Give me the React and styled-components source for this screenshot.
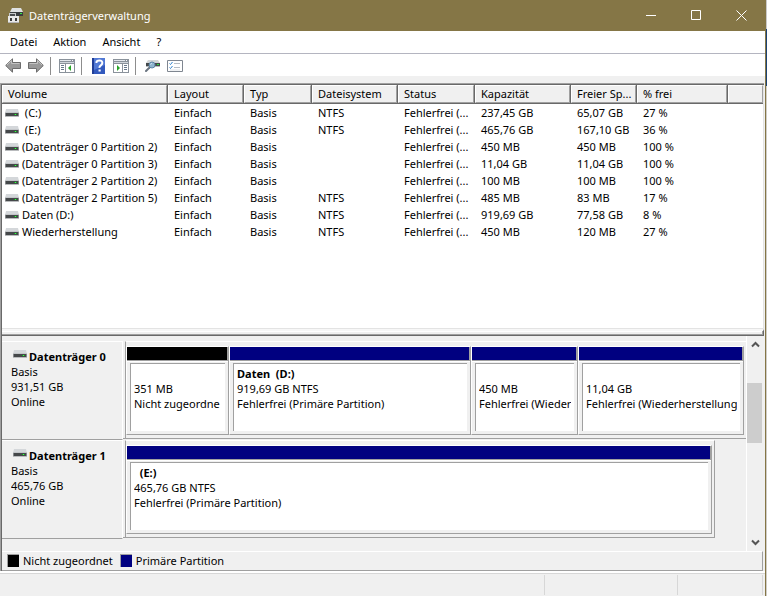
import React from "react";
import styled, { createGlobalStyle, ThemeProvider } from "styled-components";

const theme = {
  font: '"Noto Sans", "Open Sans", sans-serif',
  olive: "#857646",
  face: "#f0f0f0",
  shadow: "#a0a0a0",
  shadowDark: "#696969",
  light: "#e3e3e3",
  primary: "#000080"
};

const GlobalStyle = createGlobalStyle`
  *, *::before, *::after {
    box-sizing: border-box;
  }
  body {
    margin: 0;
    font-family: ${props => props.theme.font};
    font-size: 11px;
    line-height: 15px;
    color: #000;
  }
  button {
    font: inherit;
    color: inherit;
    border: none;
    padding: 0;
    background: none;
  }
  svg {
    display: block;
    flex: none;
  }
`;

const Desktop = styled.div`
  min-height: 100vh;
  padding-right: 1px;
  display: flex;
  background: linear-gradient(#c9c9c9 29px, #1c4273 29px, #1c4273 86px, #cfccc6 86px);
`;
const Window = styled.div`
  flex: 1;
  min-width: 0;
  display: flex;
  flex-direction: column;
  background-color: ${props => props.theme.face};
  border-right: 1px solid ${props => props.theme.olive};
`;
const TitleBar = styled.header`
  height: 31px;
  display: flex;
  align-items: center;
  gap: 6px;
  padding-left: 8px;
  background-color: ${props => props.theme.olive};
  color: #fff;
`;
const Title = styled.h1`
  flex: 1;
  margin: 0;
  font-size: 11px;
  font-weight: 400;
`;
const WindowButton = styled.button`
  width: 45px;
  height: 31px;
  display: flex;
  align-items: center;
  justify-content: center;
`;
const WindowButtons = styled.div`
  display: flex;
  padding-right: 1px;
`;
const MenuBar = styled.nav`
  height: 23px;
  display: flex;
  padding-left: 2px;
  background-color: #fff;
  border-bottom: 1px solid #b4b5c0;
`;
const MenuItem = styled.button`
  padding: 0 8px 2px;
`;
const Toolbar = styled.div`
  height: 22px;
  display: flex;
  padding: 1px 2px 0;
  background-color: #fff;
`;
const ToolButton = styled.button`
  width: 23px;
  display: flex;
  align-items: center;
  justify-content: center;
  padding-right: 1px;
`;
const Separator = styled.span`
  width: 1px;
  height: 18px;
  margin: 2px 5px 0 2px;
  background-color: #8d8d8d;
`;
const Content = styled.main`
  flex: 1;
  display: flex;
  flex-direction: column;
  margin: 7px 1px 0 0;
  border-left: 1px solid ${props => props.theme.shadow};
  border-top: 1px solid ${props => props.theme.shadow};
`;
const Panes = styled.div`
  flex: 1;
  display: flex;
  flex-direction: column;
  border-left: 1px solid ${props => props.theme.shadowDark};
  border-top: 1px solid ${props => props.theme.shadowDark};
`;
const VolumePane = styled.section`
  flex: 1;
  background-color: #fff;
  border-right: 1px solid ${props => props.theme.light};
  border-bottom: 1px solid ${props => props.theme.light};
`;
const VolumeTable = styled.table`
  width: 100%;
  table-layout: fixed;
  border-collapse: separate;
  border-spacing: 0;
`;
const HeaderCell = styled.th`
  height: 19px;
  padding: 0;
  border-bottom: 1px solid ${props => props.theme.shadowDark};
  border-right: ${props =>
    props.$last ? "none" : `1px solid ${props.theme.shadowDark}`};
  background-color: ${props => props.theme.face};
  font-weight: 400;
  text-align: left;
`;
const HeaderLabel = styled.div`
  height: 18px;
  padding-left: 5px;
  border: 1px solid #fff;
  border-right-color: ${props => props.theme.shadow};
  border-bottom-color: ${props => props.theme.shadow};
  line-height: 16px;
  white-space: nowrap;
  overflow: hidden;
`;
const Cell = styled.td`
  height: 17px;
  padding: 0 0 0 6px;
  line-height: 17px;
  white-space: nowrap;
  overflow: hidden;
`;
const VolumeName = styled.div`
  display: flex;
  align-items: center;
  gap: 3px;
  margin-left: -3px;
  white-space: pre;
`;
const Splitter = styled.div`
  height: 7px;
  border-top: 2px solid #f7f7f7;
  border-right: 1px solid ${props => props.theme.shadowDark};
  border-bottom: 1px solid ${props => props.theme.shadowDark};
  box-shadow: inset -1px -1px ${props => props.theme.shadow}, inset 0 1px #fff;
`;
const DiskPane = styled.section`
  display: flex;
  padding-right: 1px;
`;
const DiskList = styled.div`
  flex: 1;
  min-width: 0;
  padding: 5px 0 12px;
  border-right: 1px solid #fff;
`;
const DiskRow = styled.article`
  height: 99px;
  display: flex;
`;
const DiskLabel = styled.div`
  width: 121px;
  flex: none;
  padding: 7px 0 0 9px;
  border-top: 1px solid #fff;
  border-right: 1px solid #fff;
  border-bottom: 1px solid ${props => props.theme.shadow};
`;
const Gutter = styled.span`
  width: 2px;
  height: 98px;
  border-bottom: 1px solid ${props => props.theme.shadow};
`;
const DiskName = styled.h2`
  display: flex;
  gap: 2px;
  margin: 0;
  padding-left: 2px;
  font-size: 11px;
  font-weight: 700;
`;
const Text = styled.p`
  min-height: 15px;
  margin: 0;
  font-weight: ${props => (props.$bold ? 700 : 400)};
  white-space: pre;
  overflow: hidden;
`;
const DiskMap = styled.div`
  flex: 1;
  min-width: 0;
`;
const Partitions = styled.div`
  width: ${props => props.$width};
  height: 98px;
  display: grid;
  grid-template-columns: ${props => props.$columns};
  padding: 4px 2px 3px 0;
  border-left: 1px solid ${props => props.theme.shadow};
  border-top: 1px solid #fff;
  border-right: ${props =>
    props.$closed ? `1px solid ${props.theme.shadow}` : "none"};
  border-bottom: 1px solid ${props => props.theme.shadow};
`;
const Partition = styled.div`
  min-width: 0;
  display: flex;
  flex-direction: column;
  border-left: 1px solid #fff;
  border-top: 1px solid #fff;
  border-right: 1px solid ${props => props.theme.shadow};
  border-bottom: 1px solid ${props => props.theme.shadow};
`;
const PartitionBar = styled.div`
  height: 14px;
  background-color: ${props => props.$color};
  border-right: 1px solid ${props => props.theme.shadow};
  border-bottom: 1px solid ${props => props.theme.shadow};
`;
const PartitionBody = styled.div`
  flex: 1;
  padding: 1px 3px 3px;
  border-top: 1px solid #fff;
  display: flex;
`;
const PartitionInfo = styled.div`
  flex: 1;
  min-width: 0;
  padding: 2px 3px 0;
  background-color: #fff;
  border-left: 1px solid ${props => props.theme.shadow};
  border-top: 1px solid ${props => props.theme.shadow};
`;
const ScrollBar = styled.div`
  width: 16px;
  display: flex;
  flex-direction: column;
`;
const ScrollButton = styled.button`
  height: 17px;
  display: flex;
  align-items: center;
  justify-content: center;
`;
const ScrollTrack = styled.div`
  flex: 1;
  padding-top: 30px;
`;
const ScrollThumb = styled.div`
  height: 60px;
  margin-right: 1px;
  background-color: #cdcdcd;
`;
const Legend = styled.ul`
  height: 20px;
  display: flex;
  align-items: center;
  gap: 7px;
  margin: 0 1px 0 0;
  padding: 0 5px 1px;
  list-style: none;
  border-top: 1px solid #fff;
  border-right: 1px solid ${props => props.theme.shadow};
  border-bottom: 1px solid ${props => props.theme.shadow};
`;
const LegendItem = styled.li`
  display: flex;
  align-items: center;
  gap: 4px;
`;
const Swatch = styled.span`
  width: 12px;
  height: 13px;
  background-color: ${props => props.$color};
  border-left: 1px solid ${props => props.theme.shadow};
  border-top: 1px solid ${props => props.theme.shadow};
`;
const StatusBar = styled.footer`
  height: 25px;
  display: grid;
  grid-template-columns: 1fr 133px 85px;
  padding: 1px 2px 1px 0;
  border-top: 2px solid #fff;
  box-shadow: inset 0 1px #d7d7d7;
`;
const StatusPart = styled.span`
  margin-top: 1px;
  border-right: 1px solid #d7d7d7;
`;

const DriveIcon = ({ top }) => (
  <svg width="14" height={top + 8} viewBox={`0 ${-top} 14 ${top + 8}`} aria-hidden="true">
    <path d="M1 0h12L14 4H0z" fill="#d4d7da" />
    <path d="M0 3h14v1H0z" fill="#c3c6c9" />
    <path d="M0 4h14v3H0z" fill="#45484a" />
    <path d="M0 4h1v3H0zM13 4h1v3h-1z" fill="#85888a" />
    <path d="M0 7h14v1H0z" fill="#b9bbbd" />
    <path d="M9 5h3v1H9z" fill="#1f8f2a" />
    <path d="M10 5h1v1h-1z" fill="#3dff4a" />
  </svg>
);
const AppIcon = () => (
  <svg width="15" height="15" viewBox="0 0 15 15" aria-hidden="true">
    <path d="M4 0h9l2 4H2z" fill="#dfe1e2" />
    <path d="M2 4h13v4H2z" fill="#3a3d3f" />
    <path d="M12 5h2v1h-2z" fill="#35f045" />
    <path d="M1 5h7v4H1z" fill="#c8cacb" />
    <path d="M2 6h5v2H2z" fill="#4a4c4e" />
    <path d="M0 8h11v7H0z" fill="#e9e9e9" />
    <path d="M0 14h11v1H0z" fill="#b3b3b3" />
    <path d="M2 10h2v3H2zM7 10h2v3H7z" fill="#3b3b3b" />
  </svg>
);
const ArrowIcon = ({ flip }) => (
  <svg width="16" height="15" viewBox="0 0 16 15" aria-hidden="true">
    <g transform={flip ? "matrix(-1 0 0 1 16 0)" : undefined}>
      <path
        d="M7.500 .8v3.700h8v6h-8v3.700L.7 7.500z"
        fill="#999"
        stroke="#6c6c6c"
        strokeLinejoin="round"
      />
      <path d="M2 7l4.500-4.500v3h8" fill="none" stroke="#c2c2c2" />
    </g>
  </svg>
);
const PaneIcon = ({ right }) => (
  <svg width="16" height="14" viewBox="0 0 16 14" shapeRendering="crispEdges" aria-hidden="true">
    <path d="M0 0h16v14H0z" fill="#8a929b" />
    <path d="M1 1h11v1H1z" fill="#e3e7ec" />
    <path d="M13 1h1v1h-1z" fill="#fff" />
    <path d="M1 3h14v1H1z" fill="#d0d5db" />
    <path d="M1 5h14v8H1z" fill="#fff" />
    <path d={right ? "M9 5h1v8H9z" : "M6 5h1v8H6z"} fill="#8a929b" />
    <path
      d={right ? "M11 6h3v1h-3zM11 8h3v1h-3zM11 10h3v1h-3z" : "M2 6h3v1H2zM2 8h3v1H2zM2 10h3v1H2z"}
      fill="#68788b"
    />
    <path d={right ? "M4 6v6l3-3z" : "M12 6v6L9 9z"} fill="#27a327" shapeRendering="auto" />
  </svg>
);
const HelpIcon = () => (
  <svg width="13" height="16" viewBox="0 0 13 16" aria-hidden="true">
    <path d="M0 0h13v16H0z" fill="#3259bd" />
    <path d="M0 0h2v16H0z" fill="#213e96" />
    <path d="M2 0h11v7L2 12z" fill="#5279d5" />
    <path
      d="M4.500 5V4q0-1.500 3-1.500T10.300 5q0 1.300-1.500 2.300T7.500 9.800"
      fill="none"
      stroke="#fff"
      strokeWidth="2"
    />
    <path d="M6.500 11.500h2.200v2H6.500z" fill="#fff" />
  </svg>
);
const RescanIcon = () => (
  <svg width="15" height="13" viewBox="0 0 15 13" aria-hidden="true">
    <path d="M3 1h10l2 3H1z" fill="#d2d5d7" />
    <path d="M1 4h14v3H1z" fill="#44484a" />
    <path d="M1 7h14v1H1z" fill="#b5b9bb" />
    <path d="M12 5h2v1h-2z" fill="#2adf3a" />
    <path d="M4.500 8.500L1 12" stroke="#6a7480" strokeWidth="2" strokeLinecap="round" />
    <circle cx="7" cy="6" r="3" fill="#8fb4cf" stroke="#5c84a5" />
    <path d="M5.500 5.500L7 4.200" stroke="#d5e6f2" />
  </svg>
);
const ChecklistIcon = () => (
  <svg width="16" height="12" viewBox="0 0 16 12" aria-hidden="true">
    <path d="M.5.5h15v11H.5z" fill="#fff" stroke="#7f8690" />
    <path d="M2.500 3.500l1 1 2-2.500M2.500 7.500l1 1 2-2.500" fill="none" stroke="#2f83cf" />
    <path d="M7 3.500h6M7 7.500h6" stroke="#b5bcc5" />
    <path d="M3 10h10" stroke="#dfe3e8" />
  </svg>
);
const Chevron = ({ down }) => (
  <svg width="9" height="7" viewBox="0 0 9 7" aria-hidden="true">
    <path
      d={down ? "M1 1.500l3.500 3.500L8 1.500" : "M1 5.500L4.500 2 8 5.500"}
      fill="none"
      stroke="#555"
      strokeWidth="2"
    />
  </svg>
);

const columns = [
  { label: "Volume", width: 166 },
  { label: "Layout", width: 76 },
  { label: "Typ", width: 68 },
  { label: "Dateisystem", width: 86 },
  { label: "Status", width: 77 },
  { label: "Kapazität", width: 96 },
  { label: "Freier Sp...", width: 66 },
  { label: "% frei", width: 91 }
];

const volumes = [
  [" (C:)", "NTFS", "237,45 GB", "65,07 GB", "27 %"],
  [" (E:)", "NTFS", "465,76 GB", "167,10 GB", "36 %"],
  ["(Datenträger 0 Partition 2)", "", "450 MB", "450 MB", "100 %"],
  ["(Datenträger 0 Partition 3)", "", "11,04 GB", "11,04 GB", "100 %"],
  ["(Datenträger 2 Partition 2)", "", "100 MB", "100 MB", "100 %"],
  ["(Datenträger 2 Partition 5)", "NTFS", "485 MB", "83 MB", "17 %"],
  ["Daten (D:)", "NTFS", "919,69 GB", "77,58 GB", "8 %"],
  ["Wiederherstellung", "NTFS", "450 MB", "120 MB", "27 %"]
];

const disks = [
  {
    name: "Datenträger 0",
    size: "931,51 GB",
    width: "100%",
    columns: "103fr 242fr 107fr 166fr",
    partitions: [
      { color: "#000", name: "", size: "351 MB", status: "Nicht zugeordne" },
      {
        name: "Daten  (D:)",
        size: "919,69 GB NTFS",
        status: "Fehlerfrei (Primäre Partition)"
      },
      { name: "", size: "450 MB", status: "Fehlerfrei (Wieder" },
      { name: "", size: "11,04 GB", status: "Fehlerfrei (Wiederherstellung" }
    ]
  },
  {
    name: "Datenträger 1",
    size: "465,76 GB",
    width: "95%",
    closed: true,
    columns: "1fr",
    partitions: [
      {
        name: "  (E:)",
        size: "465,76 GB NTFS",
        status: "Fehlerfrei (Primäre Partition)"
      }
    ]
  }
];

function Volumes() {
  return (
    <VolumeTable>
      <colgroup>
        {columns.map(col => (
          <col key={col.label} width={col.width} />
        ))}
        <col />
      </colgroup>
      <thead>
        <tr>
          {columns.map(col => (
            <HeaderCell key={col.label} scope="col">
              <HeaderLabel>{col.label}</HeaderLabel>
            </HeaderCell>
          ))}
          <HeaderCell as="td" $last>
            <HeaderLabel />
          </HeaderCell>
        </tr>
      </thead>
      <tbody>
        {volumes.map(([name, fs, capacity, free, percent]) => (
          <tr key={name}>
            <Cell>
              <VolumeName>
                <DriveIcon top={0} />
                {name}
              </VolumeName>
            </Cell>
            <Cell>Einfach</Cell>
            <Cell>Basis</Cell>
            <Cell>{fs}</Cell>
            <Cell>Fehlerfrei (...</Cell>
            <Cell>{capacity}</Cell>
            <Cell>{free}</Cell>
            <Cell>{percent}</Cell>
            <Cell />
          </tr>
        ))}
      </tbody>
    </VolumeTable>
  );
}

function Disk({ disk }) {
  return (
    <DiskRow>
      <DiskLabel>
        <DiskName>
          <DriveIcon top={1} />
          {disk.name}
        </DiskName>
        <Text>Basis</Text>
        <Text>{disk.size}</Text>
        <Text>Online</Text>
      </DiskLabel>
      <Gutter />
      <DiskMap>
        <Partitions $width={disk.width} $columns={disk.columns} $closed={disk.closed}>
          {disk.partitions.map(part => (
            <Partition key={part.size}>
              <PartitionBar $color={part.color || theme.primary} />
              <PartitionBody>
                <PartitionInfo>
                  <Text $bold>{part.name}</Text>
                  <Text>{part.size}</Text>
                  <Text>{part.status}</Text>
                </PartitionInfo>
              </PartitionBody>
            </Partition>
          ))}
        </Partitions>
      </DiskMap>
    </DiskRow>
  );
}

function App() {
  return (
    <ThemeProvider theme={theme}>
      <GlobalStyle />
      <Desktop>
        <Window>
          <TitleBar>
            <AppIcon />
            <Title>Datenträgerverwaltung</Title>
            <WindowButtons>
              <WindowButton aria-label="Minimieren">
                <svg width="11" height="11">
                  <path d="M0 5.500h10" stroke="#fff" />
                </svg>
              </WindowButton>
              <WindowButton aria-label="Maximieren">
                <svg width="11" height="11">
                  <path d="M.5.5h9v9h-9z" fill="none" stroke="#fff" />
                </svg>
              </WindowButton>
              <WindowButton aria-label="Schließen">
                <svg width="11" height="11">
                  <path d="M.5.5l10 10M10.500.5l-10 10" stroke="#fff" />
                </svg>
              </WindowButton>
            </WindowButtons>
          </TitleBar>
          <MenuBar>
            <MenuItem>Datei</MenuItem>
            <MenuItem>Aktion</MenuItem>
            <MenuItem>Ansicht</MenuItem>
            <MenuItem>?</MenuItem>
          </MenuBar>
          <Toolbar>
            <ToolButton aria-label="Zurück">
              <ArrowIcon />
            </ToolButton>
            <ToolButton aria-label="Vorwärts">
              <ArrowIcon flip />
            </ToolButton>
            <Separator />
            <ToolButton aria-label="Konsolenstruktur">
              <PaneIcon />
            </ToolButton>
            <Separator />
            <ToolButton aria-label="Hilfe">
              <HelpIcon />
            </ToolButton>
            <ToolButton aria-label="Aktionsbereich">
              <PaneIcon right />
            </ToolButton>
            <Separator />
            <ToolButton aria-label="Datenträger neu einlesen">
              <RescanIcon />
            </ToolButton>
            <ToolButton aria-label="Eigenschaften">
              <ChecklistIcon />
            </ToolButton>
          </Toolbar>
          <Content>
            <Panes>
              <VolumePane>
                <Volumes />
              </VolumePane>
              <Splitter />
              <DiskPane>
                <DiskList>
                  {disks.map(disk => (
                    <Disk key={disk.name} disk={disk} />
                  ))}
                </DiskList>
                <ScrollBar>
                  <ScrollButton aria-label="Nach oben">
                    <Chevron />
                  </ScrollButton>
                  <ScrollTrack>
                    <ScrollThumb />
                  </ScrollTrack>
                  <ScrollButton aria-label="Nach unten">
                    <Chevron down />
                  </ScrollButton>
                </ScrollBar>
              </DiskPane>
              <Legend>
                <LegendItem>
                  <Swatch $color="#000" />
                  Nicht zugeordnet
                </LegendItem>
                <LegendItem>
                  <Swatch $color={theme.primary} />
                  Primäre Partition
                </LegendItem>
              </Legend>
            </Panes>
          </Content>
          <StatusBar>
            <StatusPart />
            <StatusPart />
            <StatusPart />
          </StatusBar>
        </Window>
      </Desktop>
    </ThemeProvider>
  );
}
export default App;
